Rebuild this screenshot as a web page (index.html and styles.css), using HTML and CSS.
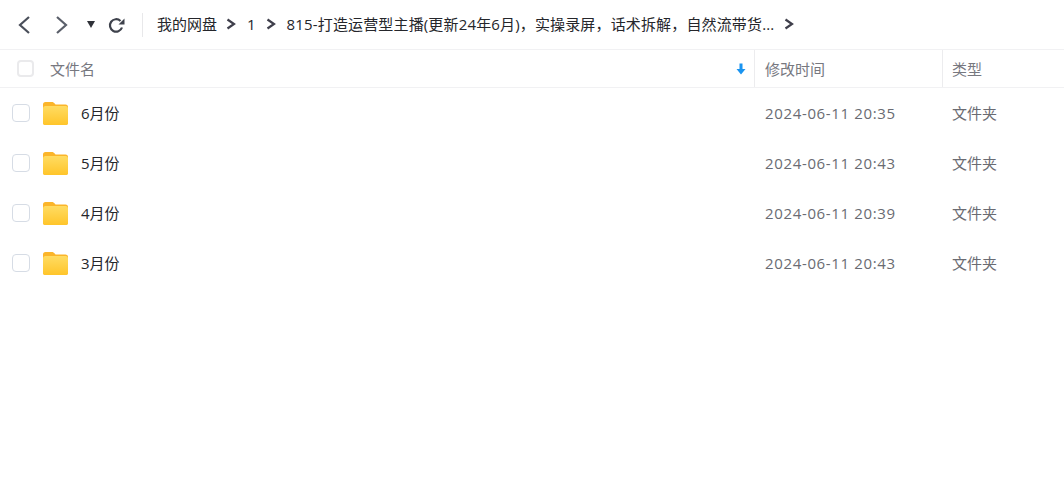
FILE: index.html
```html
<!DOCTYPE html>
<html lang="zh-CN">
<head>
<meta charset="utf-8">
<title>我的网盘</title>
<link rel="stylesheet" href="styles.css">
</head>
<body>
<svg class="defs" width="0" height="0" aria-hidden="true">
  <defs>
    <linearGradient id="fg" x1="0" y1="0" x2="0" y2="1">
      <stop offset="0" stop-color="#ffdc62"/>
      <stop offset="1" stop-color="#ffc52a"/>
    </linearGradient>
    <symbol id="folder" viewBox="0 0 25 23">
      <path d="M2.500 0H9c1 0 1.500.4 2.200 1.100L12.500 2.500H22.500A2.500 2.500 0 0 1 25 5V20.500A2.500 2.500 0 0 1 22.500 23H2.500A2.500 2.500 0 0 1 0 20.500V2.500A2.500 2.500 0 0 1 2.500 0Z" fill="#fbb52a"/>
      <rect x="0" y="4" width="25" height="19" rx="2.500" fill="url(#fg)"/>
    </symbol>
    <symbol id="sep" viewBox="0 0 10 12">
      <path d="M1.500 1.500L8 6L1.500 10.500" fill="none" stroke="#3f3f4b" stroke-width="2.200"/>
    </symbol>
  </defs>
</svg>
<header class="toolbar">
  <div class="nav">
    <svg class="nav-back" width="14" height="20" viewBox="0 0 14 20"><path d="M12 2L3 10L12 18" fill="none" stroke="#4a4f5a" stroke-width="2.200"/></svg>
    <svg class="nav-forward" width="14" height="20" viewBox="0 0 14 20"><path d="M2 2L11 10L2 18" fill="none" stroke="#5a5f6a" stroke-width="2.200"/></svg>
    <svg class="nav-drop" width="8" height="7" viewBox="0 0 8 7"><path d="M0 0H8L4 7Z" fill="#2f3138"/></svg>
    <svg class="nav-refresh" width="17" height="17" viewBox="0 0 17 17"><path d="M14 10.500A6.200 6.200 0 1 1 12.500 4" fill="none" stroke="#3e424c" stroke-width="2.200"/><path d="M16.500 1.500V7.500H10.500Z" fill="#3e424c"/></svg>
  </div>
  <nav class="crumbs">
    <span class="crumb crumb-root">我的网盘</span>
    <svg class="sep" width="10" height="12"><use href="#sep"/></svg>
    <span class="crumb">1</span>
    <svg class="sep" width="10" height="12"><use href="#sep"/></svg>
    <span class="crumb crumb-long">815-打造运营型主播(更新24年6月)，实操录屏，话术拆解，自然流带货...</span>
    <svg class="sep" width="10" height="12"><use href="#sep"/></svg>
  </nav>
</header>
<section class="table">
  <div class="head">
    <div class="head-name">
      <span class="check check-head"></span>
      <span class="head-label">文件名</span>
      <svg class="sort" width="10" height="12" viewBox="0 0 10 12"><path d="M3.500 0.500H6.500V6H9.500L5 11.500L0.500 6H3.500Z" fill="#1a94f0"/></svg>
    </div>
    <div class="head-cell">修改时间</div>
    <div class="head-cell">类型</div>
  </div>
  <div class="row">
    <div class="name"><span class="check"></span><svg class="folder"><use href="#folder"/></svg><span class="title">6月份</span></div>
    <div class="cell cell-date">2024-06-11 20:35</div>
    <div class="cell">文件夹</div>
  </div>
  <div class="row">
    <div class="name"><span class="check"></span><svg class="folder"><use href="#folder"/></svg><span class="title">5月份</span></div>
    <div class="cell cell-date">2024-06-11 20:43</div>
    <div class="cell">文件夹</div>
  </div>
  <div class="row">
    <div class="name"><span class="check"></span><svg class="folder"><use href="#folder"/></svg><span class="title">4月份</span></div>
    <div class="cell cell-date">2024-06-11 20:39</div>
    <div class="cell">文件夹</div>
  </div>
  <div class="row">
    <div class="name"><span class="check"></span><svg class="folder"><use href="#folder"/></svg><span class="title">3月份</span></div>
    <div class="cell cell-date">2024-06-11 20:43</div>
    <div class="cell">文件夹</div>
  </div>
</section>
</body>
</html>
```
FILE: styles.css
```css
* { box-sizing: border-box; }
html, body { margin: 0; height: 100%; background: #fff; overflow: hidden; }
body { font-family: "Open Sans", "Noto Sans CJK SC", sans-serif; font-size: 15px; line-height: 20px; color: #25262b; }
.defs { display: block; height: 0; }

.toolbar { display: flex; align-items: center; height: 50px; border-bottom: 1px solid #f1f1f3; }
.nav { display: flex; align-items: center; width: 143px; height: 24px; padding-left: 17px; border-right: 1px solid #e8e8ea; flex: none; }
.nav-back { margin-right: 24px; }
.nav-forward { margin-right: 18px; }
.nav-drop { margin-right: 13px; }
.nav-refresh { margin-top: 1px; }
.crumbs { display: flex; align-items: center; padding-left: 14px; white-space: nowrap; margin-top: -2px; }
.crumb-root { margin-right: -1px; }
.crumb-long { letter-spacing: .15px; }
.sep { margin: 1px 11px 0 10px; flex: none; }

.head, .row { display: grid; grid-template-columns: 755px 187px 1fr; }
.head { height: 38px; border-bottom: 1px solid #f1f1f3; color: #77787f; }
.head-name { display: flex; align-items: center; padding-left: 17px; padding-right: 8px; border-right: 1px solid #ececee; }
.head-label { margin-left: 16px; flex: 1; }
.head-cell { display: flex; align-items: center; padding-left: 10px; }
.head-cell + .head-cell { border-left: 1px solid #ececee; padding-left: 9px; }
.sort { flex: none; }

.check { display: block; width: 18px; height: 18px; border: 1.500px solid #d6dce5; border-radius: 4px; background: #fff; flex: none; }
.check-head { width: 17px; height: 17px; border: 2px solid #eaeaec; }

.row { height: 50px; align-items: center; }
.name { display: flex; align-items: center; padding-left: 12px; }
.folder { width: 25px; height: 23px; margin-left: 13px; flex: none; }
.title { margin-left: 13px; }
.cell { padding-left: 10px; color: #6a6b72; }
.cell-date { letter-spacing: .65px; }
```
